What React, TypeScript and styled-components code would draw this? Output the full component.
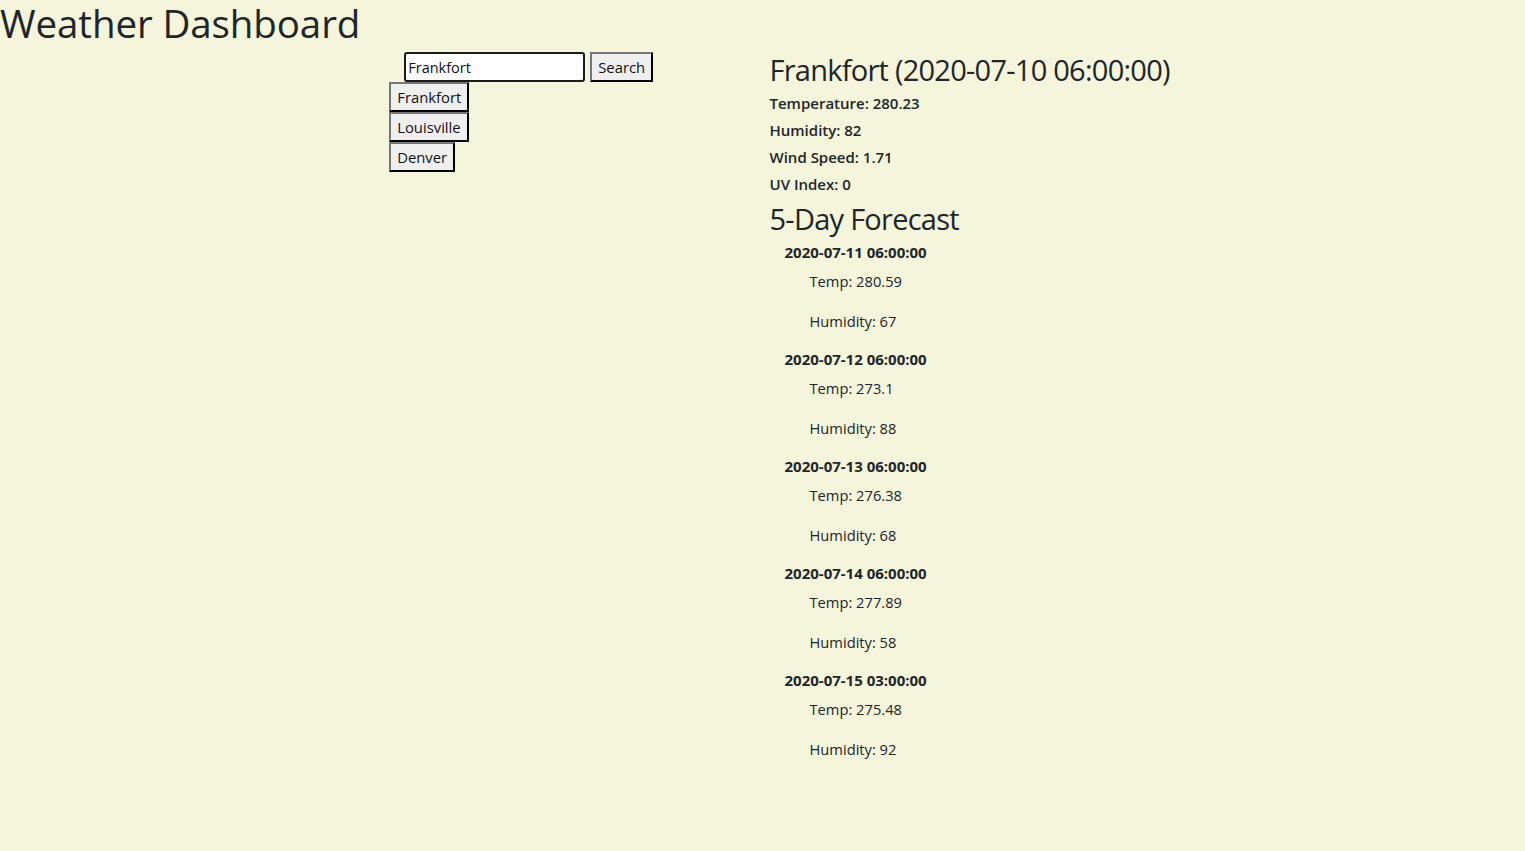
import React from "react";
import styled, { createGlobalStyle } from "styled-components";

const GlobalStyle = createGlobalStyle`
  html, body {
    margin: 0;
    padding: 0;
    background: #f5f5dc;
  }
  body {
    font-family: "Open Sans", "Liberation Sans", sans-serif;
    color: #212529;
    min-height: 851px;
  }
`;

const Title = styled.h1`
  margin: 0;
  font-size: 38.5px;
  font-weight: 500;
  line-height: 46px;
  padding-bottom: 2px;
  letter-spacing: -0.1px;
`;

const Row = styled.div`
  display: grid;
  grid-template-columns: 1fr 1fr 2fr;
  margin-top: 4px;
`;

const SideColumn = styled.div`
  grid-column: 2;
  display: flex;
  flex-direction: column;
  align-items: flex-start;
  padding-left: 8px;
`;

const SearchForm = styled.form`
  display: flex;
  align-items: flex-start;
  gap: 5px;
  height: 30px;
  margin-left: 15px;
`;

const SearchInput = styled.input`
  box-sizing: border-box;
  width: 181px;
  height: 30px;
  border: 2px solid #1b1b1b;
  border-radius: 3px;
  background: #fff;
  padding: 0 2px;
  font-family: inherit;
  font-size: 14.5px;
  color: #111;
  outline: none;
`;

const PlainButton = styled.button`
  box-sizing: border-box;
  height: 30px;
  padding: 0 6px;
  border: 2px outset #767676;
  border-right-color: #2a2a2a;
  border-bottom-color: #2a2a2a;
  background: #efefef;
  font-family: inherit;
  font-size: 14.8px;
  color: #111;
  cursor: pointer;
`;

const MainColumn = styled.div`
  grid-column: 3;
  padding-left: 7px;
`;

const CityHeading = styled.h2`
  margin: 0 0 2px;
  font-size: 29px;
  font-weight: 500;
  line-height: 36px;
  letter-spacing: -0.75px;
`;

const Stat = styled.div`
  font-size: 15px;
  font-weight: 600;
  line-height: 27px;
`;

const ForecastHeading = styled.h2`
  margin: 2px 0 2px;
  font-size: 29px;
  font-weight: 500;
  line-height: 38px;
  letter-spacing: -0.75px;
`;

const Card = styled.div`
  padding-left: 15px;
  margin-bottom: 14px;
`;

const CardDate = styled.div`
  font-size: 15px;
  font-weight: 700;
  line-height: 24px;
`;

const CardLine = styled.p<{ $first?: boolean }>`
  margin: ${(p) => (p.$first ? "5px" : "16px")} 0 0;
  padding-left: 25px;
  font-size: 14.7px;
  line-height: 24px;
`;

const cities = ["Frankfort", "Louisville", "Denver"];

const forecast = [
  { date: "2020-07-11 06:00:00", temp: "280.59", humidity: "67" },
  { date: "2020-07-12 06:00:00", temp: "273.1", humidity: "88" },
  { date: "2020-07-13 06:00:00", temp: "276.38", humidity: "68" },
  { date: "2020-07-14 06:00:00", temp: "277.89", humidity: "58" },
  { date: "2020-07-15 03:00:00", temp: "275.48", humidity: "92" },
];

export default function App() {
  return (
    <>
      <GlobalStyle />
      <Title>Weather Dashboard</Title>
      <Row>
        <SideColumn>
          <SearchForm onSubmit={(e) => e.preventDefault()}>
            <SearchInput defaultValue="Frankfort" />
            <PlainButton type="submit">Search</PlainButton>
          </SearchForm>
          {cities.map((c) => (
            <PlainButton key={c}>{c}</PlainButton>
          ))}
        </SideColumn>
        <MainColumn>
          <CityHeading>Frankfort (2020-07-10 06:00:00)</CityHeading>
          <Stat>Temperature: 280.23</Stat>
          <Stat>Humidity: 82</Stat>
          <Stat>Wind Speed: 1.71</Stat>
          <Stat>UV Index: 0</Stat>
          <ForecastHeading>5-Day Forecast</ForecastHeading>
          {forecast.map((f) => (
            <Card key={f.date}>
              <CardDate>{f.date}</CardDate>
              <CardLine $first>Temp: {f.temp}</CardLine>
              <CardLine>Humidity: {f.humidity}</CardLine>
            </Card>
          ))}
        </MainColumn>
      </Row>
    </>
  );
}
